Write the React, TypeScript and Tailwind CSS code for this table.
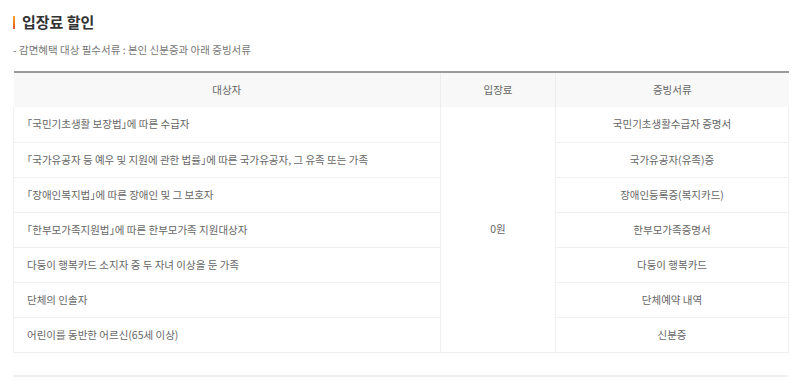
import React from 'react';

// half-width corner brackets via the font's 'halt' feature
const Law = ({ name }: { name: string }) => (
  <span className="[font-feature-settings:'halt']">「{name}」</span>
);

const rows: { target: React.ReactNode; doc: string }[] = [
  { target: <><Law name="국민기초생활 보장법" />에 따른 수급자</>, doc: '국민기초생활수급자 증명서' },
  { target: <><Law name="국가유공자 등 예우 및 지원에 관한 법률" />에 따른 국가유공자, 그 유족 또는 가족</>, doc: '국가유공자(유족)증' },
  { target: <><Law name="장애인복지법" />에 따른 장애인 및 그 보호자</>, doc: '장애인등록증(복지카드)' },
  { target: <><Law name="한부모가족지원법" />에 따른 한부모가족 지원대상자</>, doc: '한부모가족증명서' },
  { target: '다둥이 행복카드 소지자 중 두 자녀 이상을 둔 가족', doc: '다둥이 행복카드' },
  { target: '단체의 인솔자', doc: '단체예약 내역' },
  { target: '어린이를 동반한 어르신(65세 이상)', doc: '신분증' },
];

const App = () => {
  return (
    <div
      className="w-[800px] h-[384px] bg-white overflow-hidden px-[13px] pt-[12px]"
      style={{ fontFamily: '"Noto Sans CJK KR", "Noto Sans", sans-serif' }}
    >
      <h2 className="flex items-center gap-[7px] text-[15px] font-bold text-[#333] leading-[20px]">
        <span className="w-[2px] h-[13px] bg-gradient-to-b from-[#f5a623] to-[#e8542a]" />
        입장료 할인
      </h2>
      <p className="mt-[11px] text-[10.5px] text-[#777] leading-[14px]">- 감면혜택 대상 필수서류 : 본인 신분증과 아래 증빙서류</p>
      <table className="mt-[14px] w-[775px] table-fixed border-collapse border-t-2 border-t-[#9a9a9a] text-[10.5px] text-[#666]">
        <colgroup>
          <col className="w-[427px]" />
          <col className="w-[115px]" />
          <col className="w-[233px]" />
        </colgroup>
        <thead>
          <tr className="h-[35px] bg-[#f8f8f8]">
            <th className="font-normal border-r border-[#ececec]">대상자</th>
            <th className="font-normal border-r border-[#ececec]">입장료</th>
            <th className="font-normal">증빙서류</th>
          </tr>
        </thead>
        <tbody>
          {rows.map((r, i) => (
            <tr key={i} className="h-[35px]">
              <td className="pl-[13px] text-left border-l border-b border-r border-[#f0f0f0]">{r.target}</td>
              {i === 0 && (
                <td rowSpan={rows.length} className="text-center border-b border-r border-[#f0f0f0]">0원</td>
              )}
              <td className="text-center border-b border-r border-[#f0f0f0]">{r.doc}</td>
            </tr>
          ))}
        </tbody>
      </table>
      <div className="mt-[22px] w-[775px] h-[2px] bg-[#f0f0f0]" />
    </div>
  );
};

export default App;
